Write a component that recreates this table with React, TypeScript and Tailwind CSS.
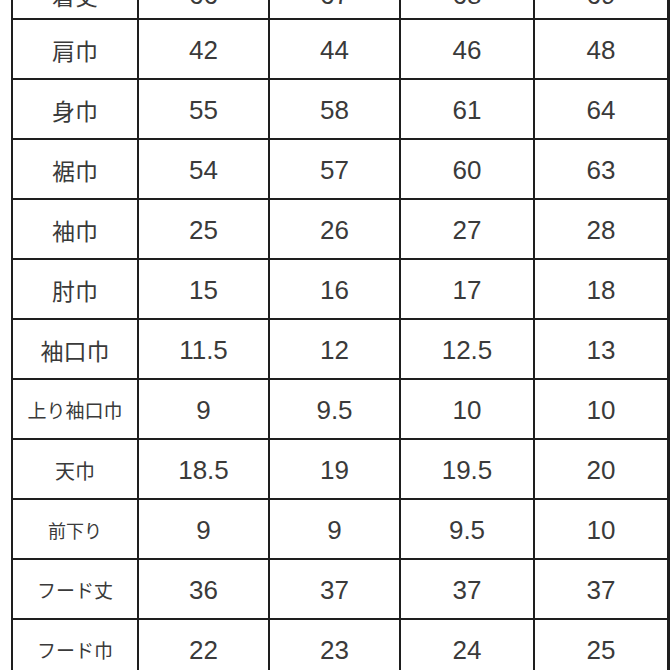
import React from "react";

const rows: { label: string; size: string; vals: string[] }[] = [
  { label: "着丈", size: "text-[23px]", vals: ["66", "67", "68", "69"] },
  { label: "肩巾", size: "text-[23px]", vals: ["42", "44", "46", "48"] },
  { label: "身巾", size: "text-[23px]", vals: ["55", "58", "61", "64"] },
  { label: "裾巾", size: "text-[23px]", vals: ["54", "57", "60", "63"] },
  { label: "袖巾", size: "text-[23px]", vals: ["25", "26", "27", "28"] },
  { label: "肘巾", size: "text-[23px]", vals: ["15", "16", "17", "18"] },
  { label: "袖口巾", size: "text-[23px]", vals: ["11.5", "12", "12.5", "13"] },
  { label: "上り袖口巾", size: "text-[19px]", vals: ["9", "9.5", "10", "10"] },
  { label: "天巾", size: "text-[20px]", vals: ["18.5", "19", "19.5", "20"] },
  { label: "前下り", size: "text-[18px]", vals: ["9", "9", "9.5", "10"] },
  { label: "フード丈", size: "text-[19px]", vals: ["36", "37", "37", "37"] },
  { label: "フード巾", size: "text-[19px]", vals: ["22", "23", "24", "25"] },
];

export default function App() {
  return (
    <div className="w-[670px] h-[670px] overflow-hidden bg-white">
      <div className="ml-[11px] mt-[-42px] w-[659px] bg-[#1e1e1e] pt-[2px] pl-[2px] pr-[3px] pb-[2px] grid grid-cols-[124px_129px_129px_132px_132px] gap-x-[2px] gap-y-[2px]">
        {rows.map((r, ri) => (
          <React.Fragment key={r.label}>
            <div
              className={`h-[58px] bg-white flex items-center justify-center text-[#3a3a3a] ${r.size} ${ri === 0 ? "pt-[12px]" : "pt-[3px]"}`}
              style={{ fontFamily: '"Noto Sans CJK JP", "Noto Sans", sans-serif' }}
            >
              {r.label}
            </div>
            {r.vals.map((v, i) => (
              <div
                key={i}
                className={`h-[58px] bg-white flex items-center justify-center text-[26px] text-[#3a3a3a] ${ri === 0 ? "pt-[12px]" : "pt-[3px]"}`}
                style={{ fontFamily: '"Liberation Sans", Arial, sans-serif' }}
              >
                {v}
              </div>
            ))}
          </React.Fragment>
        ))}
      </div>
    </div>
  );
}
